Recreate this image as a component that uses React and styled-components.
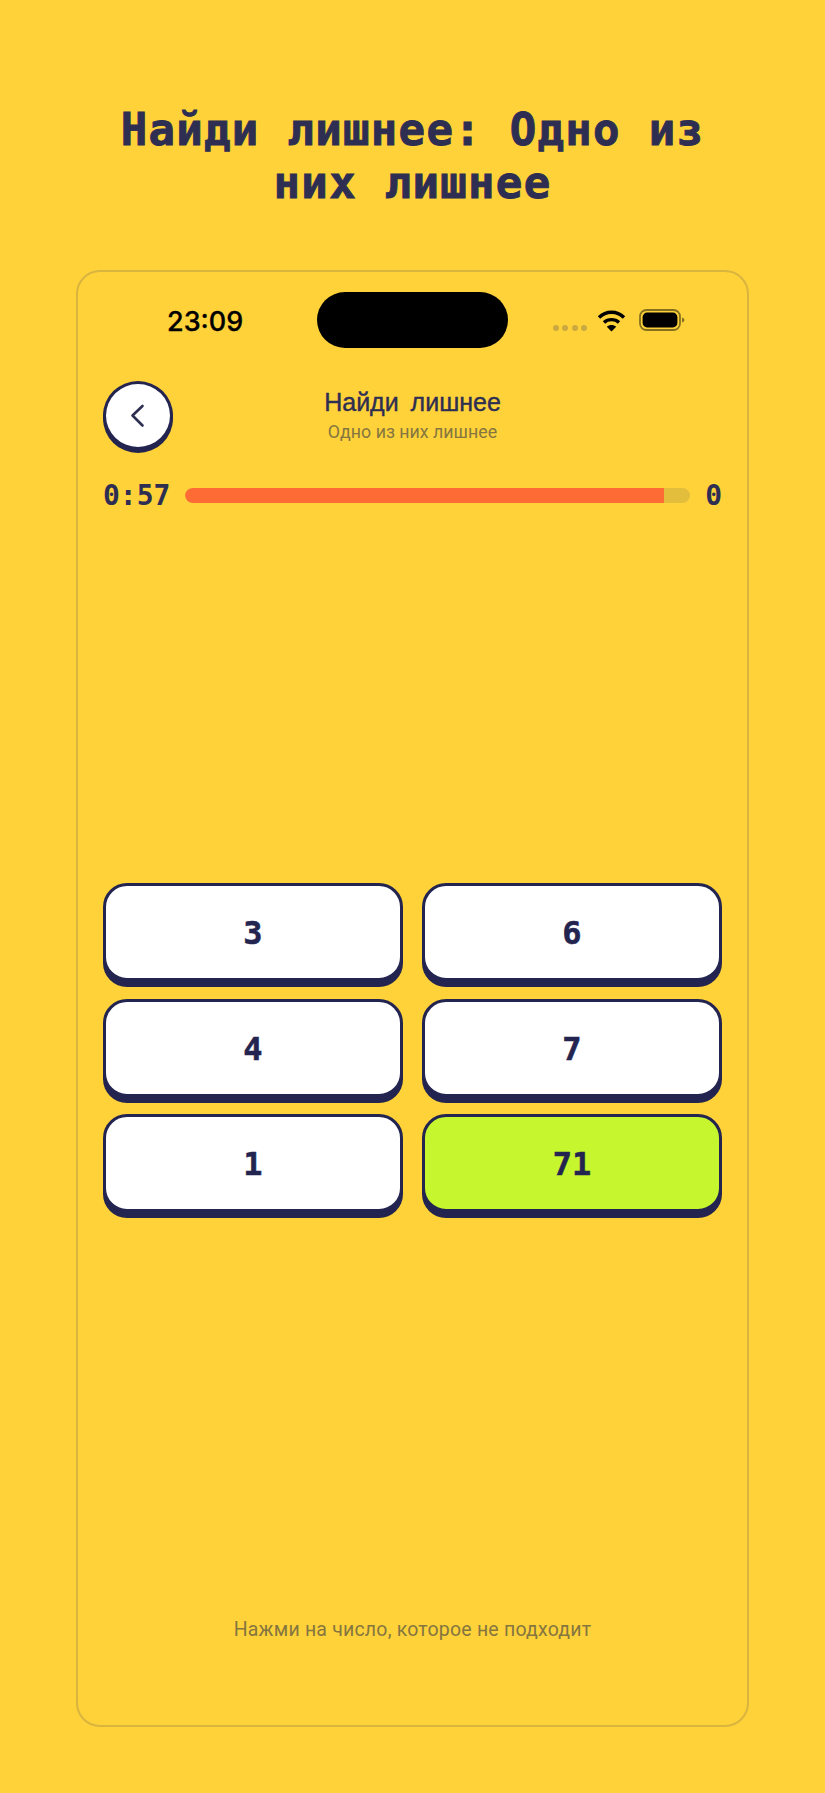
import React from "react";
import styled, { createGlobalStyle } from "styled-components";

const Global = createGlobalStyle`
  html, body { margin: 0; padding: 0; background: #ffd23a; }
  * { box-sizing: border-box; }
`;

const Page = styled.div`
  width: 825px;
  height: 1793px;
  padding: 103px 76px 0;
  display: flex;
  flex-direction: column;
  align-items: stretch;
  overflow: hidden;
`;

const Heading = styled.h1`
  margin: 0 0 51px;
  height: 116px;
  padding: 0 20px;
  font-family: "DejaVu Sans Mono", monospace;
  font-weight: 700;
  font-size: 44px;
  line-height: 53px;
  letter-spacing: 1.3px;
  text-align: center;
  color: #2d2e52;
  -webkit-text-stroke: 0.9px #2d2e52;
`;

const Frame = styled.div`
  height: 1457px;
  border: 2px solid rgba(45, 46, 82, 0.18);
  border-radius: 24px;
  padding: 0 25px;
  display: flex;
  flex-direction: column;
`;

const StatusBar = styled.div`
  height: 109px;
  position: relative;
  display: flex;
  align-items: flex-start;
  justify-content: space-between;
  padding-top: 20px;
`;

const Clock = styled.span`
  margin: 13px 0 0 64px;
  font-family: Inter, sans-serif;
  font-weight: 500;
  font-size: 27px;
  line-height: 34px;
  color: #000;
  -webkit-text-stroke: 0.3px #000;
`;

const Island = styled.div`
  position: absolute;
  left: 214px;
  top: 20px;
  width: 191px;
  height: 56px;
  border-radius: 28px;
  background: #000;
`;

const Indicators = styled.div`
  display: flex;
  align-items: center;
  gap: 13px;
  margin: 16px 37px 0 0;
  height: 24px;
`;

const Dots = styled.div`
  display: flex;
  gap: 3.5px;
  margin: 15px -3px 0 0;
`;

const Dot = styled.span`
  width: 6px;
  height: 6px;
  border-radius: 50%;
  background: rgba(45, 46, 82, 0.25);
`;

const Header = styled.div`
  display: flex;
  align-items: flex-start;
  height: 100px;
`;

const BackButton = styled.button`
  width: 70px;
  height: 69px;
  flex: none;
  padding: 0;
  border: 3px solid #23244f;
  border-radius: 50%;
  background: #fff;
  box-shadow: 0 3px 0 #23244f;
  display: flex;
  align-items: center;
  justify-content: center;
  color: #2d2e52;
`;

const HeaderText = styled.div`
  flex: 1;
  margin: 6px 70px 0 0;
  text-align: center;
`;

const ScreenTitle = styled.div`
  font-family: "Liberation Sans", sans-serif;
  font-size: 25px;
  line-height: 30px;
  word-spacing: 5px;
  color: #2d2e52;
  -webkit-text-stroke: 0.4px #2d2e52;
`;

const ScreenSub = styled.div`
  margin-top: 4px;
  font-family: Roboto, sans-serif;
  font-size: 17.8px;
  line-height: 22px;
  color: #85763f;
`;

const TimerRow = styled.div`
  display: flex;
  align-items: center;
  gap: 15px;
  height: 30px;
`;

const TimerText = styled.span`
  font-family: "DejaVu Sans Mono", monospace;
  font-weight: 700;
  font-size: 28px;
  line-height: 30px;
  color: #2d2e52;
`;

const Track = styled.div`
  flex: 1;
  height: 15px;
  margin-top: -2px;
  border-radius: 8px;
  background: #e3bd3c;
  overflow: hidden;
`;

const Fill = styled.div`
  height: 100%;
  background: #ff6b35;
  border-radius: 8px 0 0 8px;
`;

const Board = styled.div`
  margin-top: 372px;
  display: grid;
  grid-template-columns: 1fr 1fr;
  column-gap: 19px;
  row-gap: 17.5px;
`;

const Choice = styled.button`
  height: 98px;
  padding: 2px 0 0;
  border: 3px solid #23244f;
  border-radius: 24px;
  background: ${(p) => (p.$correct ? "#c6f72e" : "#fff")};
  box-shadow: 0 6px 0 #23244f;
  font-family: "DejaVu Sans Mono", monospace;
  font-weight: 700;
  font-size: 32px;
  color: #23244f;
  -webkit-text-stroke: 0.5px #23244f;
`;

const Hint = styled.div`
  margin-top: auto;
  margin-bottom: 83px;
  text-align: center;
  font-family: Roboto, sans-serif;
  font-size: 19.5px;
  line-height: 24px;
  letter-spacing: 0.2px;
  color: #85763f;
`;

const Wifi = () => (
  <svg width="29" height="23" viewBox="0 0 29 23" fill="none" stroke="#000" strokeWidth="3.4">
    <path d="M2 8.5C9 1.5 20 1.5 27 8.5" />
    <path d="M7 13.5C11 9.7 18 9.7 22 13.5" />
    <path d="M14.5 22.5L9.8 17.8C12.4 15.4 16.6 15.4 19.2 17.8Z" fill="#000" stroke="none" />
  </svg>
);

const Battery = () => (
  <svg width="46" height="22" viewBox="0 0 46 22">
    <rect x="1" y="1" width="40" height="20" rx="6.5" fill="none" stroke="#85701f" strokeWidth="1.8" />
    <rect x="3.6" y="3.6" width="34.8" height="14.8" rx="4.5" fill="#000" />
    <path d="M43 8.5c1.6.5 2.4 1.4 2.4 2.5s-.8 2-2.4 2.5z" fill="#85701f" />
  </svg>
);

const Chevron = () => (
  <svg width="18" height="26" viewBox="0 0 18 26" fill="none" stroke="#2d2e52" strokeWidth="2.6" strokeLinecap="round" strokeLinejoin="round">
    <path d="M13.5 3L3.5 12.5L13.5 22.5" />
  </svg>
);

const choices = [
  { v: "3" },
  { v: "6" },
  { v: "4" },
  { v: "7" },
  { v: "1" },
  { v: "71", correct: true },
];

export default function App() {
  return (
    <>
      <Global />
      <Page>
        <Heading>Найди лишнее: Одно из них лишнее</Heading>
        <Frame>
          <StatusBar>
            <Clock>23:09</Clock>
            <Island />
            <Indicators>
              <Dots>
                <Dot /><Dot /><Dot /><Dot />
              </Dots>
              <Wifi />
              <Battery />
            </Indicators>
          </StatusBar>
          <Header>
            <BackButton aria-label="Назад"><Chevron /></BackButton>
            <HeaderText>
              <ScreenTitle>Найди лишнее</ScreenTitle>
              <ScreenSub>Одно из них лишнее</ScreenSub>
            </HeaderText>
          </Header>
          <TimerRow>
            <TimerText>0:57</TimerText>
            <Track>
              <Fill style={{ width: `${(479 / 505) * 100}%` }} />
            </Track>
            <TimerText>0</TimerText>
          </TimerRow>
          <Board>
            {choices.map((c) => (
              <Choice key={c.v} $correct={c.correct}>{c.v}</Choice>
            ))}
          </Board>
          <Hint>Нажми на число, которое не подходит</Hint>
        </Frame>
      </Page>
    </>
  );
}
